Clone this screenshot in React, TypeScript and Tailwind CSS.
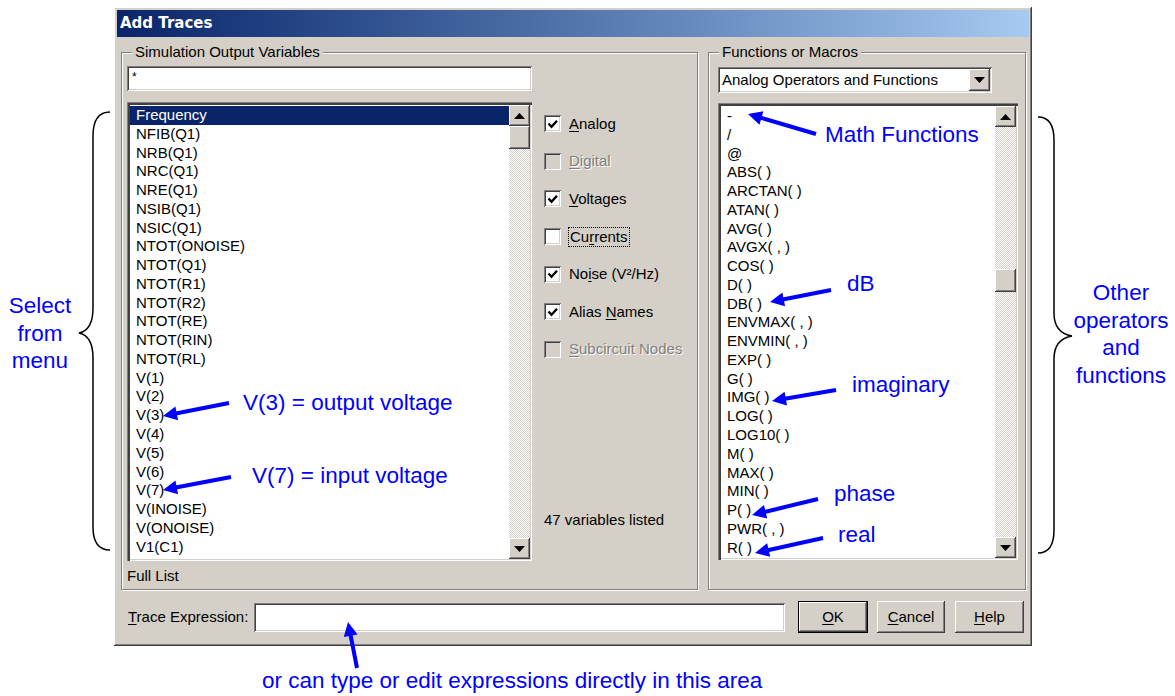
import React from "react";

// Win2k-style bevels, drawn with inset shadows
const raised =
  "shadow-[inset_-1px_-1px_0_#404040,inset_1px_1px_0_#ffffff,inset_-2px_-2px_0_#808080,inset_2px_2px_0_#d4d0c8]";
const sunken =
  "shadow-[inset_1px_1px_0_#808080,inset_-1px_-1px_0_#ffffff,inset_2px_2px_0_#404040,inset_-2px_-2px_0_#d4d0c8]";
const listBevel =
  "shadow-[inset_1px_1px_0_#808080,inset_3px_3px_0_#404040,inset_-1px_-1px_0_#ffffff,inset_-2px_-2px_0_#d4d0c8]";
const disabledText = "text-[#808080] [text-shadow:1px_1px_0_#ffffff]";

const variables = [
  "Frequency",
  "NFIB(Q1)",
  "NRB(Q1)",
  "NRC(Q1)",
  "NRE(Q1)",
  "NSIB(Q1)",
  "NSIC(Q1)",
  "NTOT(ONOISE)",
  "NTOT(Q1)",
  "NTOT(R1)",
  "NTOT(R2)",
  "NTOT(RE)",
  "NTOT(RIN)",
  "NTOT(RL)",
  "V(1)",
  "V(2)",
  "V(3)",
  "V(4)",
  "V(5)",
  "V(6)",
  "V(7)",
  "V(INOISE)",
  "V(ONOISE)",
  "V1(C1)",
];

const functions = [
  "-",
  "/",
  "@",
  "ABS( )",
  "ARCTAN( )",
  "ATAN( )",
  "AVG( )",
  "AVGX( , )",
  "COS( )",
  "D( )",
  "DB( )",
  "ENVMAX( , )",
  "ENVMIN( , )",
  "EXP( )",
  "G( )",
  "IMG( )",
  "LOG( )",
  "LOG10( )",
  "M( )",
  "MAX( )",
  "MIN( )",
  "P( )",
  "PWR( , )",
  "R( )",
];

const filters = [
  { label: "Analog", at: 0, checked: true },
  { label: "Digital", at: 0, disabled: true },
  { label: "Voltages", at: 0, checked: true },
  { label: "Currents", at: 2, focus: true },
  { label: "Noise (V²/Hz)", at: 2, checked: true },
  { label: "Alias Names", at: 6, checked: true },
  { label: "Subcircuit Nodes", at: 0, disabled: true },
];

// label with an underlined accelerator key
const Acc: React.FC<{ text: string; at: number }> = ({ text, at }) => (
  <>
    {text.slice(0, at)}
    <span className="underline underline-offset-2">{text[at]}</span>
    {text.slice(at + 1)}
  </>
);

const Triangle: React.FC<{ up?: boolean }> = ({ up }) => (
  <svg width="11" height="6" viewBox="0 0 11 6">
    <path d={up ? "M5.5 0L11 6H0z" : "M0 0h11L5.5 6z"} fill="#000" />
  </svg>
);

const ArrowButton: React.FC<{ up?: boolean }> = ({ up }) => (
  <div className={`flex h-[21px] w-[21px] shrink-0 items-center justify-center bg-[#d4d0c8] ${raised}`}>
    <Triangle up={up} />
  </div>
);

const ScrollBar: React.FC<{ thumb: string }> = ({ thumb }) => (
  <div className="flex w-[21px] shrink-0 flex-col">
    <ArrowButton up />
    <div className="flex-1 bg-[image:repeating-conic-gradient(#d4d0c8_0_25%,#ffffff_0_50%)] bg-[length:2px_2px]">
      <div className={`h-[23px] w-full bg-[#d4d0c8] ${raised} ${thumb}`} />
    </div>
    <ArrowButton />
  </div>
);

const ListBox: React.FC<{ items: string[]; selected?: number; thumb: string; className: string }> = ({
  items,
  selected,
  thumb,
  className,
}) => (
  <div className={`flex bg-white pb-[2px] pl-[3px] pr-[2px] pt-[3px] ${listBevel} ${className}`}>
    <div className="flex-1 overflow-hidden pt-[1px]">
      {items.map((t, i) => (
        <div
          key={t}
          className={`h-[18.78px] whitespace-nowrap pl-[6px] leading-[18.78px] ${
            i === selected ? "bg-[#0a246a] text-white" : ""
          }`}
        >
          {t}
        </div>
      ))}
    </div>
    <ScrollBar thumb={thumb} />
  </div>
);

const CheckBox: React.FC<{ checked?: boolean; disabled?: boolean }> = ({ checked, disabled }) => (
  <span
    className={`flex h-[17px] w-[17px] shrink-0 items-center justify-center ${
      disabled ? "bg-[#d4d0c8]" : "bg-white"
    } ${sunken}`}
  >
    {checked && (
      <svg width="11" height="10" viewBox="0 0 11 10">
        <path d="M1.5 4.5l3 3.2 5.5-6" stroke="#000" strokeWidth="2.4" fill="none" />
      </svg>
    )}
  </span>
);

const GroupBox: React.FC<{ title: string; className: string; children: React.ReactNode }> = ({
  title,
  className,
  children,
}) => (
  <div
    className={`relative h-[538px] border border-[#808080] shadow-[inset_1px_1px_0_#ffffff,1px_1px_0_#ffffff] ${className}`}
  >
    <span className="absolute -top-[10px] left-[10px] bg-[#d4d0c8] px-[3px] leading-[18px]">{title}</span>
    {children}
  </div>
);

const Button: React.FC<{ className?: string; children: React.ReactNode }> = ({ className = "", children }) => (
  <div className={`flex h-[30px] items-center justify-center bg-[#d4d0c8] leading-[18px] ${raised} ${className}`}>
    {children}
  </div>
);

const Dialog: React.FC = () => (
  <div className={`flex w-[918px] flex-col bg-[#d4d0c8] p-[3px] text-[15px] text-black ${raised}`}>
    <div className="flex h-[27px] items-center bg-linear-to-r from-[#0a246a] to-[#a6caf0] pl-[3px] font-['DejaVu_Sans',sans-serif] text-[15px] font-bold text-white">
      Add Traces
    </div>

    <div className="mt-[15px] flex gap-[10px] pl-[4px] pr-[3px]">
      <GroupBox title="Simulation Output Variables" className="w-[577px]">
        <div className="flex flex-col pl-[5px] pt-[13px]">
          <div className={`h-[25px] w-[405px] bg-white pl-[5px] pt-[5px] text-[12px] leading-none ${sunken}`}>*</div>
          <div className="mt-[11px] flex">
            <ListBox items={variables} selected={0} thumb="mt-0" className="h-[459px] w-[405px]" />
            <div className="ml-[12px] flex flex-col pb-[32px] pt-[3px]">
              {filters.map((f) => (
                <div key={f.label} className="flex h-[37.6px] items-center gap-[8px]">
                  <CheckBox checked={f.checked} disabled={f.disabled} />
                  <span
                    className={`whitespace-nowrap leading-[18px] ${f.disabled ? disabledText : ""} ${
                      f.focus ? "-ml-[1px] border border-dotted border-black px-[1px]" : ""
                    }`}
                  >
                    <Acc text={f.label} at={f.at} />
                  </span>
                </div>
              ))}
              <div className="mt-auto leading-[18px]">47 variables listed</div>
            </div>
          </div>
          <div className="mt-[6px] leading-[18px]">Full List</div>
        </div>
      </GroupBox>

      <GroupBox title="Functions or Macros" className="w-[318px]">
        <div className="flex flex-col pl-[9px] pt-[14px]">
          <div className={`flex h-[26px] w-[274px] items-center bg-white p-[2px] ${sunken}`}>
            <span className="flex-1 whitespace-nowrap pl-[2px] leading-[18px]">Analog Operators and Functions</span>
            <div className={`flex h-full w-[21px] items-center justify-center bg-[#d4d0c8] ${raised}`}>
              <Triangle />
            </div>
          </div>
          <ListBox items={functions} thumb="mt-[142px]" className="mt-[10px] h-[457px] w-[300px]" />
        </div>
      </GroupBox>
    </div>

    <div className="mb-[10px] mt-[11px] flex h-[32px] items-center pl-[11px] pr-[5px]">
      <span className="w-[126px] whitespace-nowrap leading-[18px]">
        <Acc text="Trace Expression:" at={0} />
      </span>
      <div className={`h-[29px] w-[531px] bg-white ${sunken}`} />
      <div className="ml-[13px] border border-black">
        <Button className="w-[68px]">
          <Acc text="OK" at={0} />
        </Button>
      </div>
      <Button className="ml-[9px] h-[32px] w-[68px]">
        <Acc text="Cancel" at={0} />
      </Button>
      <Button className="ml-[10px] h-[32px] w-[69px]">
        <Acc text="Help" at={0} />
      </Button>
    </div>
  </div>
);

// blue call-out arrow: shaft plus filled head at (x2, y2)
const Arrow: React.FC<{ x1: number; y1: number; x2: number; y2: number }> = ({ x1, y1, x2, y2 }) => {
  const len = Math.hypot(x2 - x1, y2 - y1);
  const ux = (x2 - x1) / len;
  const uy = (y2 - y1) / len;
  const bx = x2 - ux * 14;
  const by = y2 - uy * 14;
  const pts = `${x2},${y2} ${bx - uy * 7},${by + ux * 7} ${bx + uy * 7},${by - ux * 7}`;
  return (
    <g>
      <line x1={x1} y1={y1} x2={bx + ux} y2={by + uy} stroke="#0000ff" strokeWidth={4} />
      <polygon points={pts} fill="#0000ff" />
    </g>
  );
};

const Note: React.FC<{ className: string; children: React.ReactNode }> = ({ className, children }) => (
  <span className={`absolute whitespace-nowrap text-[22.5px] text-[#0000ff] ${className}`}>{children}</span>
);

const Annotations: React.FC = () => (
  <>
    <svg className="pointer-events-none absolute left-0 top-0" width="1175" height="696" viewBox="0 0 1175 696">
      <path
        d="M110 112 Q93 112 93 136 L93 308 Q93 330 79 333 Q93 336 93 358 L93 527 Q93 550 110 550"
        stroke="#000"
        strokeWidth="1.5"
        fill="none"
      />
      <path
        d="M1038 117 Q1054 117 1054 140 L1054 313 Q1054 333 1072 336 Q1054 339 1054 359 L1054 530 Q1054 553 1038 553"
        stroke="#000"
        strokeWidth="1.5"
        fill="none"
      />
      <Arrow x1={816} y1={134} x2={748} y2={114} />
      <Arrow x1={831} y1={290} x2={770} y2={302} />
      <Arrow x1={836} y1={390} x2={772} y2={401} />
      <Arrow x1={818} y1={499} x2={752} y2={515} />
      <Arrow x1={823} y1={538} x2={755} y2={553} />
      <Arrow x1={229} y1={403} x2={163} y2={416} />
      <Arrow x1={231} y1={477} x2={163} y2={490} />
      <Arrow x1={357} y1={668} x2={348} y2={622} />
    </svg>
    <Note className="left-[825px] top-[124px] leading-none">Math Functions</Note>
    <Note className="left-[847px] top-[273px] leading-none">dB</Note>
    <Note className="left-[852px] top-[374px] leading-none">imaginary</Note>
    <Note className="left-[834px] top-[483px] leading-none">phase</Note>
    <Note className="left-[838px] top-[524px] leading-none">real</Note>
    <Note className="left-[243px] top-[392px] leading-none">V(3) = output voltage</Note>
    <Note className="left-[252px] top-[465px] leading-none">V(7) = input voltage</Note>
    <Note className="left-[262px] top-[670px] leading-none">or can type or edit expressions directly in this area</Note>
    <Note className="left-0 top-[292px] w-[80px] text-center leading-[27.5px]">
      Select
      <br />
      from
      <br />
      menu
    </Note>
    <Note className="left-[1071px] top-[279px] w-[100px] text-center leading-[27.5px]">
      Other
      <br />
      operators
      <br />
      and
      <br />
      functions
    </Note>
  </>
);

export default function App() {
  return (
    <div className="relative h-[696px] w-[1175px] overflow-hidden bg-white pl-[114px] pt-[7px] font-['Liberation_Sans',Arial,sans-serif]">
      <Dialog />
      <Annotations />
    </div>
  );
}
